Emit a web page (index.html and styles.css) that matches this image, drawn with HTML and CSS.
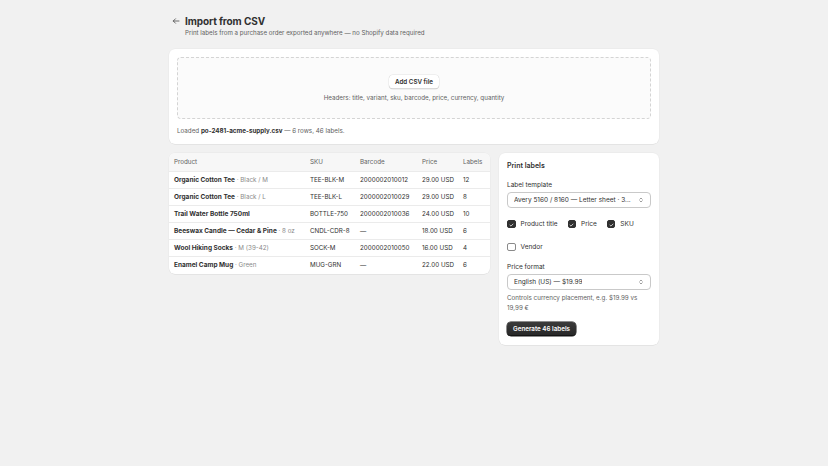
FILE: index.html
```html
<!DOCTYPE html>
<html lang="en">
<head>
<meta charset="utf-8">
<title>Import from CSV</title>
<link rel="stylesheet" href="styles.css">
</head>
<body>
<div class="page">
  <div class="content">
    <header class="header">
      <button class="back" aria-label="Back">
        <svg viewBox="0 0 20 20" width="20" height="20"><path d="M16 10H4.5M9 5.5 4.5 10 9 14.5" fill="none" stroke="#4a4a4a" stroke-width="1.6" stroke-linecap="round" stroke-linejoin="round"/></svg>
      </button>
      <div class="titles">
        <h1 class="title">Import from CSV</h1>
        <p class="subtitle">Print labels from a purchase order exported anywhere — no Shopify data required</p>
      </div>
    </header>

    <section class="card upload">
      <div class="dropzone">
        <button class="btn">Add CSV file</button>
        <p class="hint">Headers: title, variant, sku, barcode, price, currency, quantity</p>
      </div>
      <p class="loaded">Loaded <strong>po-2481-acme-supply.csv</strong> — 6 rows, 46 labels.</p>
    </section>

    <div class="columns">
      <section class="card table-card">
        <table class="table">
          <thead>
            <tr><th class="c-product">Product</th><th class="c-sku">SKU</th><th class="c-barcode">Barcode</th><th class="c-price">Price</th><th class="c-labels">Labels</th></tr>
          </thead>
          <tbody>
            <tr><td><strong>Organic Cotton Tee</strong><span class="variant"> · Black / M</span></td><td>TEE-BLK-M</td><td>2000002010012</td><td>29.00 USD</td><td>12</td></tr>
            <tr><td><strong>Organic Cotton Tee</strong><span class="variant"> · Black / L</span></td><td>TEE-BLK-L</td><td>2000002010029</td><td>29.00 USD</td><td>8</td></tr>
            <tr><td><strong>Trail Water Bottle 750ml</strong></td><td>BOTTLE-750</td><td>2000002010036</td><td>24.00 USD</td><td>10</td></tr>
            <tr><td><strong>Beeswax Candle — Cedar &amp; Pine</strong><span class="variant"> · 8 oz</span></td><td>CNDL-CDR-8</td><td>—</td><td>18.00 USD</td><td>6</td></tr>
            <tr><td><strong>Wool Hiking Socks</strong><span class="variant"> · M (39-42)</span></td><td>SOCK-M</td><td>2000002010050</td><td>16.00 USD</td><td>4</td></tr>
            <tr><td><strong>Enamel Camp Mug</strong><span class="variant"> · Green</span></td><td>MUG-GRN</td><td>—</td><td>22.00 USD</td><td>6</td></tr>
          </tbody>
        </table>
      </section>

      <section class="card settings">
        <h2 class="card-title">Print labels</h2>
        <div class="field">
          <label class="label">Label template</label>
          <div class="select">
            <span class="select-text">Avery 5160 / 8160 — Letter sheet · 3...</span>
            <svg class="chev" viewBox="0 0 20 20" width="16" height="16"><path d="M7 8l3-3 3 3M7 12l3 3 3-3" fill="none" stroke="#5c5c5c" stroke-width="1.5" stroke-linecap="round" stroke-linejoin="round"/></svg>
          </div>
        </div>
        <div class="checks">
          <span class="check"><span class="box on"><svg viewBox="0 0 16 16" width="16" height="16"><path d="M4.5 8.3 6.8 10.5 11.5 5.8" fill="none" stroke="#fff" stroke-width="1.6" stroke-linecap="round" stroke-linejoin="round"/></svg></span>Product title</span>
          <span class="check"><span class="box on"><svg viewBox="0 0 16 16" width="16" height="16"><path d="M4.5 8.3 6.8 10.5 11.5 5.8" fill="none" stroke="#fff" stroke-width="1.6" stroke-linecap="round" stroke-linejoin="round"/></svg></span>Price</span>
          <span class="check"><span class="box on"><svg viewBox="0 0 16 16" width="16" height="16"><path d="M4.5 8.3 6.8 10.5 11.5 5.8" fill="none" stroke="#fff" stroke-width="1.6" stroke-linecap="round" stroke-linejoin="round"/></svg></span>SKU</span>
        </div>
        <div class="checks vendor">
          <span class="check"><span class="box"></span>Vendor</span>
        </div>
        <div class="field">
          <label class="label">Price format</label>
          <div class="select">
            <span class="select-text">English (US) — $19.99</span>
            <svg class="chev" viewBox="0 0 20 20" width="16" height="16"><path d="M7 8l3-3 3 3M7 12l3 3 3-3" fill="none" stroke="#5c5c5c" stroke-width="1.5" stroke-linecap="round" stroke-linejoin="round"/></svg>
          </div>
          <p class="help">Controls currency placement, e.g. $19.99 vs 19,99 €</p>
        </div>
        <div class="actions">
          <button class="btn primary">Generate 46 labels</button>
        </div>
      </section>
    </div>
  </div>
</div>
</body>
</html>
```

FILE: styles.css
```css
* { box-sizing: border-box; }
html, body { margin: 0; padding: 0; background: #f1f1f1; }
body {
  font-family: Inter, "Noto Sans", "Liberation Sans", sans-serif;
  color: #303030;
}
.page {
  zoom: 0.5;
  width: 1656px;
  min-height: 932px;
  background: #f1f1f1;
}
.content {
  width: 980px;
  margin: 0 auto;
  padding-top: 28px;
}
.header {
  display: flex;
  align-items: flex-start;
  gap: 8px;
  margin-bottom: 22px;
  padding-left: 4px;
}
.back {
  border: 0;
  background: transparent;
  padding: 0;
  margin-top: 4px;
  width: 20px;
  height: 20px;
  display: flex;
  cursor: pointer;
}
.title {
  margin: 0;
  font-size: 20px;
  line-height: 28px;
  font-weight: 700;
  color: #303030;
  letter-spacing: -0.2px;
}
.subtitle {
  margin: 0;
  font-size: 12.4px;
  line-height: 20px;
  color: #616161;
}
.card {
  background: #fff;
  border-radius: 12px;
  box-shadow: 0 1px 0 rgba(26,26,26,0.07), 0 0 0 1px rgba(0,0,0,0.04);
}
.upload {
  padding: 16px;
}
.dropzone {
  height: 124px;
  border: 1px dashed #d4d4d4;
  border-radius: 8px;
  background: #fbfbfb;
  display: flex;
  flex-direction: column;
  align-items: center;
  justify-content: center;
  gap: 8px;
  padding-top: 2px;
}
.btn {
  font-family: inherit;
  font-size: 12.5px;
  font-weight: 600;
  color: #303030;
  background: #fff;
  border: 0;
  border-radius: 8px;
  height: 28px;
  padding: 0 12px;
  box-shadow: inset 0 -1px 0 #b5b5b5, 0 0 0 1px #e3e3e3;
}
.hint {
  margin: 0;
  font-size: 12.5px;
  line-height: 20px;
  color: #616161;
}
.loaded {
  margin: 14px 0 0;
  font-size: 12.5px;
  line-height: 20px;
  color: #616161;
}
.loaded strong { color: #303030; font-weight: 700; }
.columns {
  display: grid;
  grid-template-columns: 642px 320px;
  gap: 18px;
  margin-top: 18px;
  align-items: start;
}
.table-card { overflow: hidden; }
.table {
  width: 100%;
  border-collapse: collapse;
  font-size: 12.5px;
}
.table th {
  background: #f7f7f7;
  height: 37px;
  text-align: left;
  font-weight: 400;
  color: #616161;
  padding: 0 0 0 10px;
  border-bottom: 1px solid #ebebeb;
}
.table td {
  height: 34px;
  padding: 0 0 0 10px;
  border-bottom: 1px solid #ebebeb;
  color: #303030;
  white-space: nowrap;
}
.table tr:last-child td { border-bottom: 0; }
.table td strong { font-weight: 700; font-size: 13px; }
.variant { color: #8a8a8a; }
.c-product { width: 272px; }
.c-sku { width: 100px; }
.c-barcode { width: 124px; }
.c-price { width: 82px; }
.settings {
  padding: 16px 16px 18px;
}
.card-title {
  margin: 0 0 18px;
  font-size: 14px;
  line-height: 20px;
  font-weight: 600;
}
.field { margin-bottom: 12px; }
.label {
  display: block;
  font-size: 13px;
  line-height: 20px;
  margin-bottom: 4px;
}
.select {
  height: 32px;
  border: 1px solid #c9c9c9;
  border-radius: 8px;
  display: flex;
  align-items: center;
  justify-content: space-between;
  padding: 0 10px 0 12px;
  font-size: 13px;
  background: #fff;
}
.select-text { white-space: nowrap; overflow: hidden; }
.chev { flex: none; }
.checks {
  display: flex;
  gap: 20px;
  margin: 22px 0 0;
  font-size: 13px;
}
.checks.vendor { margin: 26px 0 20px; }
.check {
  display: flex;
  align-items: center;
  gap: 10px;
  line-height: 20px;
}
.box {
  width: 17px;
  height: 17px;
  border-radius: 4px;
  border: 1px solid #8a8a8a;
  background: #fff;
  display: inline-flex;
}
.box.on {
  background: #303030;
  border-color: #303030;
}
.box.on svg { margin: -0.5px; }
.help {
  margin: 6px 0 0;
  font-size: 12.5px;
  line-height: 20px;
  color: #616161;
}
.actions { margin-top: 18px; }
.btn.primary {
  background: linear-gradient(#3b3b3b, #262626);
  color: #fff;
  box-shadow: inset 0 -1px 0 #000, 0 0 0 1px #1a1a1a;
  height: 28px;
  padding: 0 12px;
  font-size: 12.5px;
}
```
